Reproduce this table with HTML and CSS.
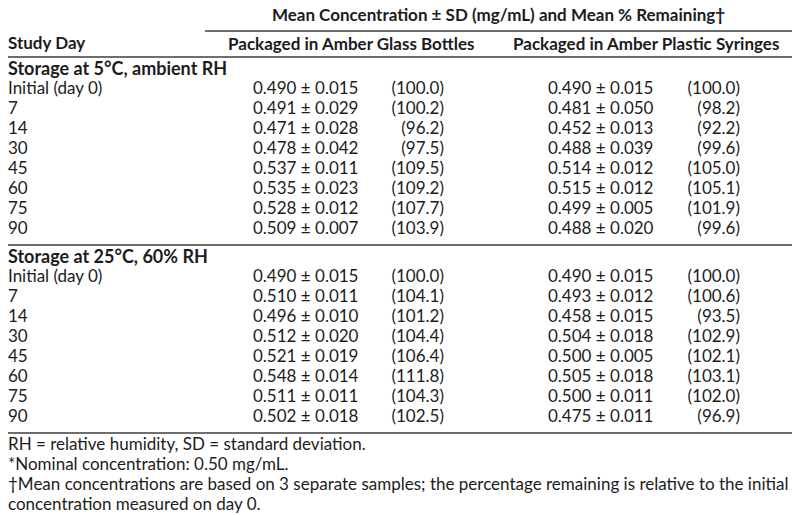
FILE: index.html
```html
<!DOCTYPE html>
<html>
<head>
<meta charset="utf-8">
<title>Stability table</title>
<link rel="stylesheet" href="styles.css">
</head>
<body>
<table class="stab">
  <colgroup>
    <col class="c-day"><col class="c-gv"><col class="c-gp"><col class="c-sv"><col class="c-sp">
  </colgroup>
  <thead>
    <tr class="hdr-top">
      <th class="blank"></th>
      <th class="span" colspan="4">Mean Concentration ± SD (mg/mL) and Mean % Remaining†</th>
    </tr>
    <tr class="hdr-sub">
      <th class="day">Study Day</th>
      <th class="grp glass" colspan="2">Packaged in Amber Glass Bottles</th>
      <th class="grp syr" colspan="2">Packaged in Amber Plastic Syringes</th>
    </tr>
  </thead>
  <tbody>
    <tr class="section"><th colspan="5">Storage at 5°C, ambient RH</th></tr>
    <tr><td>Initial (day 0)</td><td class="gv">0.490 ± 0.015</td><td class="gp">(100.0)</td><td class="sv">0.490 ± 0.015</td><td class="sp">(100.0)</td></tr>
    <tr><td>7</td><td class="gv">0.491 ± 0.029</td><td class="gp">(100.2)</td><td class="sv">0.481 ± 0.050</td><td class="sp">(98.2)</td></tr>
    <tr><td>14</td><td class="gv">0.471 ± 0.028</td><td class="gp">(96.2)</td><td class="sv">0.452 ± 0.013</td><td class="sp">(92.2)</td></tr>
    <tr><td>30</td><td class="gv">0.478 ± 0.042</td><td class="gp">(97.5)</td><td class="sv">0.488 ± 0.039</td><td class="sp">(99.6)</td></tr>
    <tr><td>45</td><td class="gv">0.537 ± 0.011</td><td class="gp">(109.5)</td><td class="sv">0.514 ± 0.012</td><td class="sp">(105.0)</td></tr>
    <tr><td>60</td><td class="gv">0.535 ± 0.023</td><td class="gp">(109.2)</td><td class="sv">0.515 ± 0.012</td><td class="sp">(105.1)</td></tr>
    <tr><td>75</td><td class="gv">0.528 ± 0.012</td><td class="gp">(107.7)</td><td class="sv">0.499 ± 0.005</td><td class="sp">(101.9)</td></tr>
    <tr class="last"><td>90</td><td class="gv">0.509 ± 0.007</td><td class="gp">(103.9)</td><td class="sv">0.488 ± 0.020</td><td class="sp">(99.6)</td></tr>
  </tbody>
  <tbody>
    <tr class="section"><th colspan="5">Storage at 25°C, 60% RH</th></tr>
    <tr><td>Initial (day 0)</td><td class="gv">0.490 ± 0.015</td><td class="gp">(100.0)</td><td class="sv">0.490 ± 0.015</td><td class="sp">(100.0)</td></tr>
    <tr><td>7</td><td class="gv">0.510 ± 0.011</td><td class="gp">(104.1)</td><td class="sv">0.493 ± 0.012</td><td class="sp">(100.6)</td></tr>
    <tr><td>14</td><td class="gv">0.496 ± 0.010</td><td class="gp">(101.2)</td><td class="sv">0.458 ± 0.015</td><td class="sp">(93.5)</td></tr>
    <tr><td>30</td><td class="gv">0.512 ± 0.020</td><td class="gp">(104.4)</td><td class="sv">0.504 ± 0.018</td><td class="sp">(102.9)</td></tr>
    <tr><td>45</td><td class="gv">0.521 ± 0.019</td><td class="gp">(106.4)</td><td class="sv">0.500 ± 0.005</td><td class="sp">(102.1)</td></tr>
    <tr><td>60</td><td class="gv">0.548 ± 0.014</td><td class="gp">(111.8)</td><td class="sv">0.505 ± 0.018</td><td class="sp">(103.1)</td></tr>
    <tr><td>75</td><td class="gv">0.511 ± 0.011</td><td class="gp">(104.3)</td><td class="sv">0.500 ± 0.011</td><td class="sp">(102.0)</td></tr>
    <tr class="last"><td>90</td><td class="gv">0.502 ± 0.018</td><td class="gp">(102.5)</td><td class="sv">0.475 ± 0.011</td><td class="sp">(96.9)</td></tr>
  </tbody>
</table>
<div class="notes">
  <p>RH = relative humidity, SD = standard deviation.</p>
  <p>*Nominal concentration: 0.50 mg/mL.</p>
  <p>†Mean concentrations are based on 3 separate samples; the percentage remaining is relative to the initial concentration measured on day 0.</p>
</div>
</body>
</html>
```

FILE: styles.css
```css
html, body {
  background: #ffffff;
}
body {
  margin: 5px 8px 0;
  font-family: "Lato", "Liberation Sans", sans-serif;
  font-size: 17px;
  line-height: 20px;
  color: #1c1c1c;
}
.stab {
  width: 784px;
  table-layout: fixed;
  border-collapse: collapse;
  border-spacing: 0;
}
.c-day { width: 197px; }
.c-gv { width: 165px; }
.c-gp { width: 100px; }
.c-sv { width: 170px; }
.c-sp { width: 152px; }

.stab th, .stab td {
  padding: 0;
  white-space: nowrap;
  vertical-align: top;
}
.stab th {
  font-weight: 700;
  text-align: left;
}
.hdr-top .span {
  text-align: center;
  padding-bottom: 5px;
  border-bottom: 2px solid #6e6e6e;
}
.hdr-sub th {
  padding-top: 2px;
  padding-bottom: 2px;
  border-bottom: 2px solid #6e6e6e;
}
.hdr-sub .glass { padding-left: 23px; }
.hdr-sub .syr { padding-left: 43px; }

.section th {
  font-size: 18px;
}
.stab .gv { padding-left: 48px; }
.stab .gp { text-align: right; padding-right: 26px; }
.stab .sv { padding-left: 78px; }
.stab .sp { text-align: right; padding-right: 52px; }

.stab tr.last td {
  padding-bottom: 6px;
  border-bottom: 2px solid #6e6e6e;
}
.notes p {
  margin: 0;
  width: 784px;
}
```
